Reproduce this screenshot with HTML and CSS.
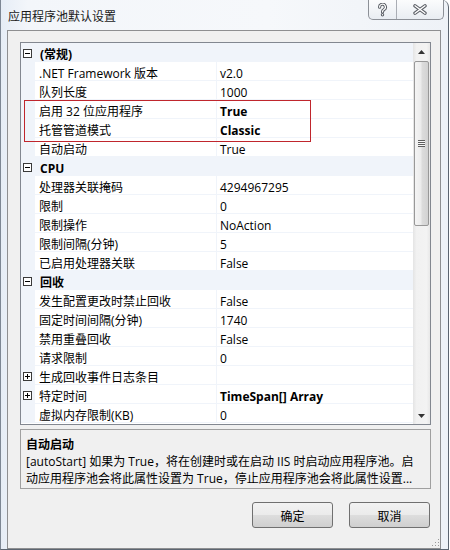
FILE: index.html
```html
<!DOCTYPE html>
<html lang="zh-CN">
<head>
<meta charset="utf-8">
<title>应用程序池默认设置</title>
<link rel="stylesheet" href="styles.css">
</head>
<body>
<div class="window">
  <div class="titlebar">
    <span class="title">应用程序池默认设置</span>
    <div class="caps">
      <div class="cap cap-help">
        <svg width="11" height="14" viewBox="0 0 11 14"><path d="M2.6 4.2 A2.9 2.9 0 1 1 7 6.6 C5.8 7.3 5.5 7.8 5.5 9" fill="none" stroke="#5b5f66" stroke-width="3.2" stroke-linecap="round"/><circle cx="5.5" cy="11.8" r="1.7" fill="#5b5f66"/><path d="M2.6 4.2 A2.9 2.9 0 1 1 7 6.6 C5.8 7.3 5.5 7.8 5.5 9" fill="none" stroke="#fff" stroke-width="1.2" stroke-linecap="round"/><circle cx="5.5" cy="11.8" r="0.7" fill="#fff"/></svg>
      </div>
      <div class="cap cap-close">
        <svg width="14" height="11" viewBox="0 0 14 11"><path d="M2 1.8 L12 9.2 M12 1.8 L2 9.2" stroke="#5b5f66" stroke-width="3.4" stroke-linecap="round"/><path d="M2 1.8 L12 9.2 M12 1.8 L2 9.2" stroke="#fff" stroke-width="1.4" stroke-linecap="round"/></svg>
      </div>
    </div>
  </div>
  <div class="client">
    <div class="grid">
      <div class="rows">
        <div class="cat"><span class="mg"><span class="tog minus"></span></span><span class="cname">(常规)</span></div>
        <div class="row"><span class="mg"></span><span class="name">.NET Framework 版本</span><span class="val">v2.0</span></div>
        <div class="row"><span class="mg"></span><span class="name">队列长度</span><span class="val">1000</span></div>
        <div class="row"><span class="mg"></span><span class="name">启用 32 位应用程序</span><span class="val b">True</span></div>
        <div class="row"><span class="mg"></span><span class="name">托管管道模式</span><span class="val b">Classic</span></div>
        <div class="row"><span class="mg"></span><span class="name">自动启动</span><span class="val">True</span></div>
        <div class="cat"><span class="mg"><span class="tog minus"></span></span><span class="cname">CPU</span></div>
        <div class="row"><span class="mg"></span><span class="name">处理器关联掩码</span><span class="val">4294967295</span></div>
        <div class="row"><span class="mg"></span><span class="name">限制</span><span class="val">0</span></div>
        <div class="row"><span class="mg"></span><span class="name">限制操作</span><span class="val">NoAction</span></div>
        <div class="row"><span class="mg"></span><span class="name">限制间隔(分钟)</span><span class="val">5</span></div>
        <div class="row"><span class="mg"></span><span class="name">已启用处理器关联</span><span class="val">False</span></div>
        <div class="cat"><span class="mg"><span class="tog minus"></span></span><span class="cname">回收</span></div>
        <div class="row"><span class="mg"></span><span class="name">发生配置更改时禁止回收</span><span class="val">False</span></div>
        <div class="row"><span class="mg"></span><span class="name">固定时间间隔(分钟)</span><span class="val">1740</span></div>
        <div class="row"><span class="mg"></span><span class="name">禁用重叠回收</span><span class="val">False</span></div>
        <div class="row"><span class="mg"></span><span class="name">请求限制</span><span class="val">0</span></div>
        <div class="row"><span class="mg"><span class="tog plus"></span></span><span class="name">生成回收事件日志条目</span><span class="val"></span></div>
        <div class="row"><span class="mg"><span class="tog plus"></span></span><span class="name">特定时间</span><span class="val b">TimeSpan[] Array</span></div>
        <div class="row"><span class="mg"></span><span class="name">虚拟内存限制(KB)</span><span class="val">0</span></div>
      </div>
      <div class="sb">
        <div class="sb-btn"><svg width="7" height="4" viewBox="0 0 7 4"><path d="M0 4 L3.5 0 L7 4 Z" fill="#333"/></svg></div>
        <div class="thumb"><span class="grip"></span></div>
        <div class="sb-fill"></div>
        <div class="sb-btn"><svg width="7" height="4" viewBox="0 0 7 4"><path d="M0 0 L7 0 L3.5 4 Z" fill="#333"/></svg></div>
      </div>
      <div class="mark"></div>
    </div>
    <div class="desc">
      <div class="desc-title">自动启动</div>
      <div class="desc-line">[autoStart] 如果为 True，将在创建时或在启动 IIS 时启动应用程序池。启</div>
      <div class="desc-line">动应用程序池会将此属性设置为 True，停止应用程序池会将此属性设置...</div>
    </div>
    <div class="buttons">
      <button class="btn">确定</button>
      <button class="btn">取消</button>
    </div>
    <div class="sizegrip"></div>
  </div>
</div>
</body>
</html>
```
FILE: styles.css
```css
html, body {
  margin: 0;
  padding: 0;
  background: #ffffff;
}
body {
  font-family: "Open Sans", "Noto Sans CJK SC", sans-serif;
  font-size: 12px;
  color: #000;
}
.window {
  width: 449px;
  height: 550px;
  box-sizing: border-box;
  border-left: 1px solid #7d8794;
  border-right: 1px solid #5c6570;
  border-bottom: 1px solid #5c6570;
  border-top-right-radius: 7px;
  background: linear-gradient(90deg, #e6edf6 0%, #f3f6fa 6%, #f6f8fb 60%, #eef2f7 100%);
  display: flex;
  flex-direction: column;
}
.titlebar {
  height: 30px;
  flex: none;
  display: flex;
  justify-content: space-between;
  align-items: flex-start;
}
.title {
  padding: 8px 0 0 7px;
  line-height: 16px;
  font-family: "Noto Sans CJK SC", sans-serif;
  font-size: 12px;
  color: #1a1a1a;
}
.caps {
  display: flex;
  height: 19px;
  margin-right: 4px;
  border: 1px solid #8c9097;
  border-top: none;
  border-radius: 0 0 5px 5px;
  background: linear-gradient(#fbfcfd, #e9edf2);
  overflow: hidden;
}
.cap {
  display: flex;
  align-items: center;
  justify-content: center;
}
.cap-help {
  width: 27px;
  border-right: 1px solid #a9adb4;
}
.cap-close {
  width: 46px;
}
.client {
  flex: 1;
  margin: 0 7px 0 6px;
  border: 1px solid #8e8f91;
  background: #f0f0f0;
  padding: 11px 9px 0 12px;
  display: flex;
  flex-direction: column;
  position: relative;
}
.grid {
  height: 383px;
  box-sizing: border-box;
  border: 1px solid #828790;
  display: flex;
  position: relative;
  background: #fff;
}
.rows {
  flex: 1;
  display: flex;
  flex-direction: column;
}
.cat, .row {
  height: 18px;
  flex: none;
  border-bottom: 1px solid #f0f4fa;
  display: grid;
  grid-template-columns: 14px 182px 1fr;
  grid-template-rows: 18px;
  white-space: nowrap;
}
.cat {
  background: #f0f4fa;
  font-weight: bold;
}
.mg {
  background: #f0f4fa;
  display: flex;
  align-items: center;
}
.tog {
  width: 9px;
  height: 9px;
  box-sizing: border-box;
  border: 1px solid #3a3a3a;
  margin: 3px 0 0 2px;
  position: relative;
  background: #fff;
}
.tog::before, .tog::after {
  content: "";
  position: absolute;
  background: #000;
}
.tog::before {
  left: 1px;
  top: 3px;
  width: 5px;
  height: 1px;
}
.tog.plus::after {
  left: 3px;
  top: 1px;
  width: 1px;
  height: 5px;
}
.cname, .name, .val {
  box-sizing: border-box;
  height: 18px;
  padding-top: 5px;
  line-height: 14px;
}
.cname {
  padding-left: 5px;
}
.name {
  padding-left: 4px;
  border-right: 1px solid #f0f4fa;
}
.val {
  padding-left: 3px;
}
.b {
  font-weight: bold;
}
.sb {
  width: 17px;
  flex: none;
  display: flex;
  flex-direction: column;
  background: linear-gradient(90deg, #e4e4e4 0%, #f1f1f1 20%, #f3f3f3 80%, #e8e8e8 100%);
}
.sb-btn {
  height: 17px;
  flex: none;
  display: flex;
  align-items: center;
  justify-content: center;
}
.thumb {
  height: 165px;
  flex: none;
  margin: 1px 1px 0 1px;
  box-sizing: border-box;
  border: 1px solid #989898;
  border-radius: 2px;
  background: linear-gradient(90deg, #f4f4f4 0%, #ececec 45%, #dcdcdc 55%, #d2d2d2 100%);
  display: flex;
  align-items: center;
  justify-content: center;
}
.grip {
  width: 7px;
  height: 7px;
  background: repeating-linear-gradient(#5e5e5e 0 1px, #f7f7f7 1px 2px);
}
.sb-fill {
  flex: 1;
}
.mark {
  position: absolute;
  left: 3px;
  top: 57px;
  width: 287px;
  height: 42px;
  box-sizing: border-box;
  border: 1px solid #c0262d;
  pointer-events: none;
}
.desc {
  margin-top: 4px;
  height: 60px;
  box-sizing: border-box;
  border: 1px solid #a0a0a0;
  padding: 6px 0 0 5px;
  line-height: 17px;
  white-space: nowrap;
}
.desc-title {
  font-weight: bold;
}
.buttons {
  margin: 13px 1px 0 0;
  display: flex;
  justify-content: flex-end;
  gap: 16px;
}
.btn {
  width: 81px;
  height: 26px;
  box-sizing: border-box;
  border: 1px solid #707070;
  border-radius: 3px;
  background: linear-gradient(#f2f2f2 0%, #ebebeb 48%, #dddddd 52%, #cfcfcf 100%);
  font-family: "Noto Sans CJK SC", sans-serif;
  font-size: 12px;
  color: #000;
  padding: 0;
}
.sizegrip {
  position: absolute;
  right: 1px;
  bottom: 2px;
  width: 8px;
  height: 8px;
  background:
    radial-gradient(circle, #9a9a9a 0.8px, transparent 1px) 0 0 / 3px 3px;
  clip-path: polygon(100% 0, 100% 100%, 0 100%);
}
```
